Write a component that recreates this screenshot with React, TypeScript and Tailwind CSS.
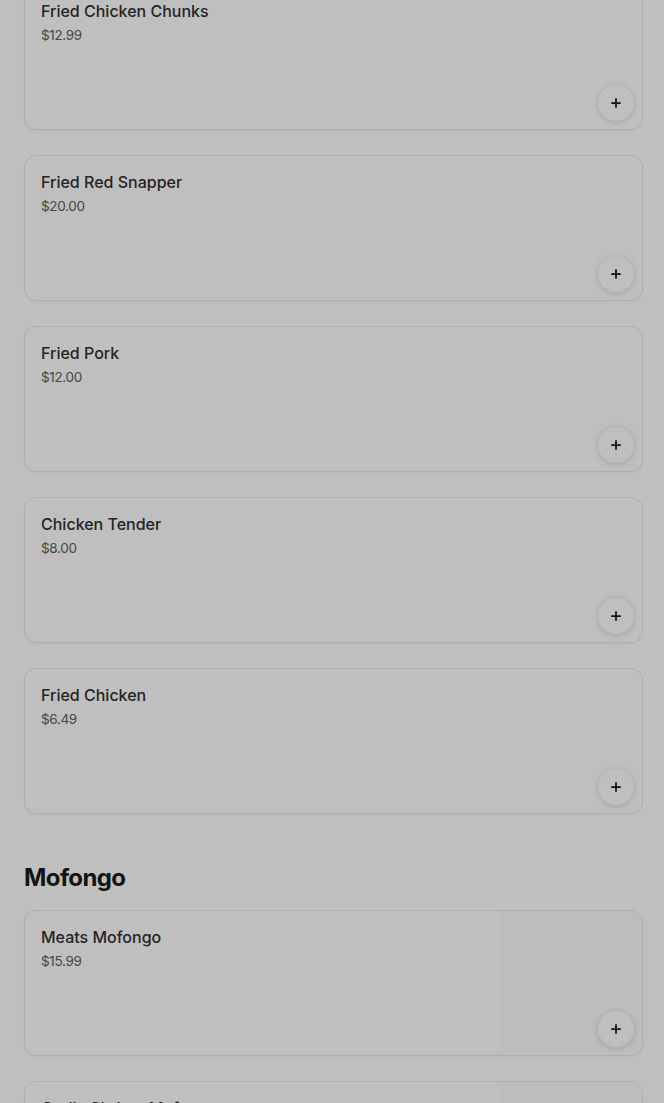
import { Plus } from "lucide-react"

type MenuItem = {
  name: string
  price: string
  hasImage?: boolean
}

type MenuSection = {
  title?: string
  items: MenuItem[]
}

const sections: MenuSection[] = [
  {
    items: [
      { name: "Fried Chicken Chunks", price: "$12.99" },
      { name: "Fried Red Snapper", price: "$20.00" },
      { name: "Fried Pork", price: "$12.00" },
      { name: "Chicken Tender", price: "$8.00" },
      { name: "Fried Chicken", price: "$6.49" },
    ],
  },
  {
    title: "Mofongo",
    items: [
      { name: "Meats Mofongo", price: "$15.99", hasImage: true },
      { name: "Garlic Shrimp Mofongo", price: "$18.99", hasImage: true },
    ],
  },
]

function MenuItemCard({ item }: { item: MenuItem }) {
  return (
    <div className="relative flex h-[146px] overflow-hidden rounded-xl border border-[#e9e9e9] bg-white shadow-[0_1px_2px_rgba(0,0,0,0.04)]">
      <div className="min-w-0 flex-1 p-4">
        <div className="truncate text-base leading-5 font-medium text-[#303030]">{item.name}</div>
        <div className="mt-1 text-[13.5px] leading-5 tracking-tight text-[#606060]">{item.price}</div>
      </div>
      {item.hasImage ? <div className="h-full w-[143px] shrink-0 bg-[#fcfcfc]" /> : null}
      <button
        type="button"
        className="absolute right-2 bottom-2 flex h-9 w-9 items-center justify-center rounded-full bg-white text-[#191919] shadow-[0_1px_6px_rgba(0,0,0,0.16)]"
      >
        <Plus size={14} strokeWidth={3} />
      </button>
    </div>
  )
}

export default function App() {
  return (
    <div className="relative h-[1103px] overflow-hidden bg-white font-['Inter','Noto_Sans',sans-serif]">
      <div className="-mt-4 flex flex-col pr-[21px] pl-6">
        {sections.map((section, index) => (
          <section key={index} className={index > 0 ? "mt-12" : ""}>
            {section.title ? (
              <h2 className="mb-4 h-8 text-2xl leading-8 font-bold tracking-tight text-[#1a1a1a]">
                {section.title}
              </h2>
            ) : null}
            <div className="flex flex-col gap-[25px]">
              {section.items.map((item) => (
                <MenuItemCard key={item.name} item={item} />
              ))}
            </div>
          </section>
        ))}
      </div>
      {/* modal backdrop dimming the page */}
      <div className="pointer-events-none absolute inset-0 bg-black/25" />
    </div>
  )
}
